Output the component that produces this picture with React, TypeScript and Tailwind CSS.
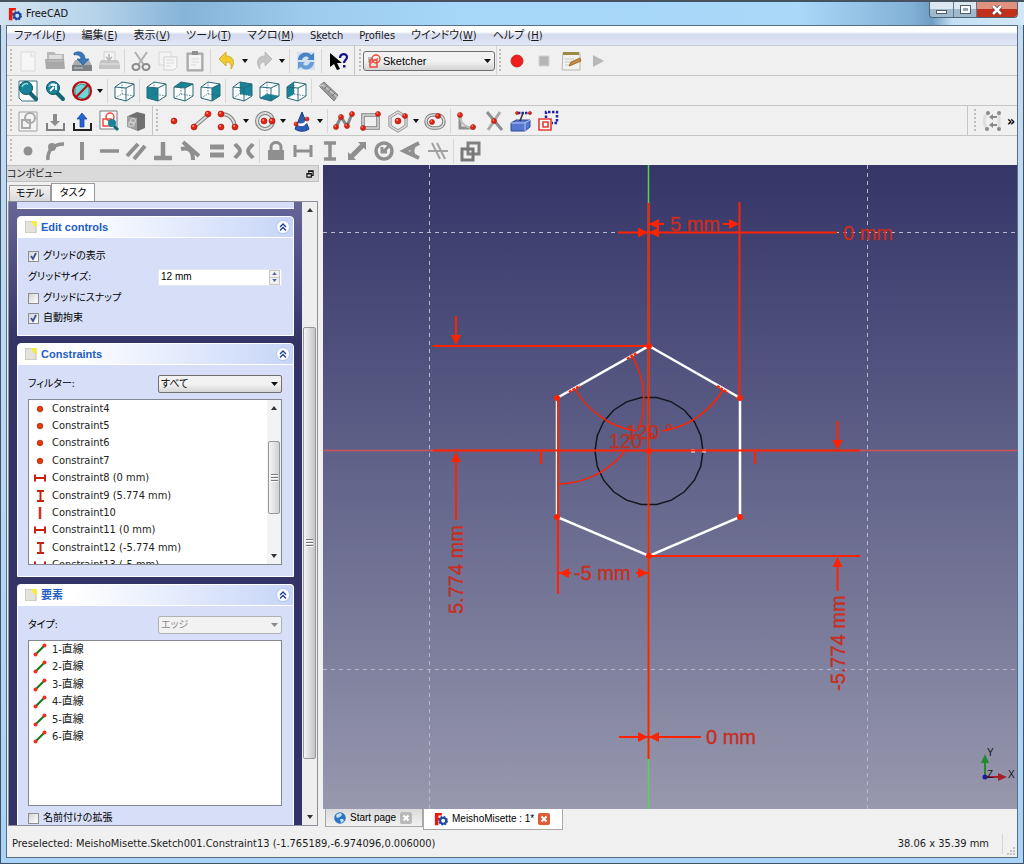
import type { ReactNode } from "react";

const TEAL = "#17849a";
const GREY = "#8f8f8f";
const RED = "#ff2200";

function Svg({ children }: { children: ReactNode }) {
    return (
        <svg viewBox="0 0 24 24" className="w-6 h-6 shrink-0" fill="none" aria-hidden="true">
            {children}
        </svg>
    );
}

function Ball({ x, y, r = 3 }: { x: number; y: number; r?: number }) {
    return (
        <g>
            <circle cx={x} cy={y} r={r} fill="#e32412" stroke="#a3140a" strokeWidth="0.6" />
            <circle cx={x - 0.8} cy={y - 0.9} r={r / 3} fill="#ff9a85" />
        </g>
    );
}

function FreeCadLogo() {
    return (
        <svg viewBox="0 0 16 16" className="w-[14px] h-[14px] shrink-0" aria-hidden="true">
            <path d="M1 1h8v3H5v2.500h3v3H5V15H1z" fill="#e8190f" />
            <circle cx="10.500" cy="10" r="3.400" fill="none" stroke="#1e4a9e" strokeWidth="2.400" />
            <circle cx="10.500" cy="10" r="4.700" fill="none" stroke="#1e4a9e" strokeWidth="1.600" strokeDasharray="2 1.690" />
        </svg>
    );
}

const cubeFaces: Record<string, string> = {
    front: "3,8 14,9 14,22 3,19",
    top: "3,8 10,3 22,5 14,9",
    right: "14,9 22,5 22,17 14,22",
    rear: "10,3 22,5 22,17 10,15",
    bottom: "3,19 10,15 22,17 14,22",
    left: "3,8 10,3 10,15 3,19",
};

function Cube({ face }: { face?: string }) {
    return (
        <Svg>
            <polygon points="3,8 10,3 22,5 22,17 14,22 3,19" fill="#fbfdfd" />
            {face && <polygon points={cubeFaces[face]} fill={TEAL} />}
            <path d="M10 3v12M3 19l7-4M10 15l12 2" stroke="#2b6775" strokeWidth="0.8" strokeDasharray="1.500 1.200" />
            <path d="M3 8l7-5 12 2v12l-8 5-11-3zM3 8l11 1 8-4M14 9v13" stroke="#2b6775" strokeWidth="1" strokeLinejoin="round" />
        </Svg>
    );
}

const fileIcons = {
    new: (
        <Svg>
            <path d="M5 3h14v19H5z" fill="#f6f6f6" stroke="#dadada" />
            <path d="M14 3l5 5h-5z" fill="#e6e6e6" />
        </Svg>
    ),
    open: (
        <Svg>
            <path d="M4 3h7l2 2h8v12H4z" fill="#b9b9b9" />
            <path d="M6 6h13v8H6z" fill="#dedede" />
            <path d="M2 10h19l1 10H3z" fill="#a8a8a8" />
            <path d="M4 12h16" stroke="#c4c4c4" />
        </Svg>
    ),
    save: (
        <Svg>
            <path d="M5 11h14l3 6v5H2v-5z" fill="#a8abaf" />
            <path d="M2 16h20v6H2z" fill="#7e8286" />
            <path d="M4 19h9" stroke="#c9cccf" />
            <path d="M4 4c6-3 11 0 11 6h4l-6 6-6-6h4c0-3-3-5-7-4z" fill="#3b78b8" stroke="#265a92" strokeWidth="0.700" />
        </Svg>
    ),
    print: (
        <Svg>
            <path d="M7 3h11v9H7z" fill="#f4f4f4" stroke="#d2d2d2" />
            <path d="M4 11h17l2 4v5H2v-5z" fill="#c4c4c4" />
            <path d="M2 15h21" stroke="#e8e8e8" />
            <path d="M12 5v5M9 8l3 3 3-3" stroke="#b4b4b4" strokeWidth="1.500" />
        </Svg>
    ),
    cut: (
        <Svg>
            <path d="M6 3l9 13M18 3L9 16" stroke="#b0b0b0" strokeWidth="2" />
            <ellipse cx="7" cy="18" rx="3.500" ry="3" stroke="#8c8c8c" strokeWidth="2" />
            <ellipse cx="17" cy="18" rx="3.500" ry="3" stroke="#8c8c8c" strokeWidth="2" />
        </Svg>
    ),
    copy: (
        <Svg>
            <path d="M3 3h12v13H3z" fill="#f3f3f3" stroke="#d6d6d6" />
            <path d="M8 8h13v10l-3 3H8z" fill="#f6f6f6" stroke="#cfcfcf" />
            <path d="M10 11h8M10 14h8M10 17h5" stroke="#dadada" />
        </Svg>
    ),
    paste: (
        <Svg>
            <path d="M4 4h16v18H4z" fill="#b5b5b5" stroke="#a3a3a3" />
            <path d="M6 6h12v14H6z" fill="#f4f4f4" />
            <path d="M9 2h6v4H9z" fill="#8e8e8e" />
            <path d="M8 10h8M8 13h8M8 16h5" stroke="#dadada" />
        </Svg>
    ),
    undo: (
        <Svg>
            <path d="M4 10l7-7v4c7 0 10 6 5 13 1-5-1-7-5-7v4z" fill="#f2cc2f" stroke="#c99f13" strokeWidth="0.800" />
        </Svg>
    ),
    redo: (
        <Svg>
            <path d="M20 10l-7-7v4c-7 0-10 6-5 13-1-5 1-7 5-7v4z" fill="#c3c3c3" stroke="#b4b4b4" strokeWidth="0.800" />
        </Svg>
    ),
    refresh: (
        <Svg>
            <path d="M3 3h18v18H3z" fill="#d3e2f2" />
            <path d="M4 11c0-7 9-10 13-5l3-2v7h-7l2-2c-3-3-6-1-7 2z" fill="#4a83c4" />
            <path d="M20 13c0 7-9 10-13 5l-3 2v-7h7l-2 2c3 3 6 1 7-2z" fill="#6b9dd5" />
        </Svg>
    ),
    whatsThis: (
        <Svg>
            <path d="M4 4v14l4-3 3 6 3-1-3-6h5z" fill="#000" />
            <path d="M14 9c0-5 7-5 7-1 0 3-3 3-3 6" stroke="#12128c" strokeWidth="2.200" />
            <path d="M17 16h2.500v2.500H17z" fill="#12128c" />
        </Svg>
    ),
};

const magnifier = (
    <g>
        <path d="M14 14l6 6" stroke="#176575" strokeWidth="4" strokeLinecap="round" />
        <circle cx="10" cy="9" r="6.500" fill={TEAL} stroke="#0d5261" />
        <path d="M6 8c1-3 4-4 6-3" stroke="#8fd0dc" strokeWidth="1.500" />
    </g>
);

const viewIcons = {
    fitAll: (
        <Svg>
            <path d="M3 2h18v20H6l-3-3z" fill="#fff" stroke="#3b7583" />
            {magnifier}
        </Svg>
    ),
    fitSelection: (
        <Svg>
            {magnifier}
            <path d="M7 12l4-4M8 6h5v5" stroke="#fff" strokeWidth="1.800" />
        </Svg>
    ),
    drawStyle: (
        <Svg>
            <path d="M5 8l6-3 8 2v9l-5 4-9-3z" fill="#6fd6da" stroke="#2b8c95" />
            <circle cx="12" cy="12" r="9" stroke="#b01010" strokeWidth="2.200" />
            <path d="M18 6L6 18" stroke="#b01010" strokeWidth="2.200" />
        </Svg>
    ),
    measure: (
        <Svg>
            <path d="M3 7l5-4 14 13-4 6z" fill="#9a9a9a" stroke="#808080" />
            <path d="M3 7l4-1 14 12" stroke="#c9c9c9" strokeWidth="1.500" />
            <path d="M8 10l3-3M12 13l3-3M16 17l3-3" stroke="#6f6f6f" />
        </Svg>
    ),
};

const sketchFileIcons = {
    newSketch: (
        <Svg>
            <path d="M3 3h18v19H3z" fill="#f4f4f4" stroke="#a0a0a0" />
            <circle cx="14" cy="9" r="5" stroke="#a9a9a9" strokeWidth="2" />
            <path d="M6 11h8v8H6z" stroke="#a9a9a9" strokeWidth="2" />
        </Svg>
    ),
    importSketch: (
        <Svg>
            <path d="M4 14v7h17v-7" stroke="#808080" strokeWidth="2" />
            <path d="M12 17l-5-5h3V5h4v7h3z" fill="#8c8c8c" />
        </Svg>
    ),
    leaveSketch: (
        <Svg>
            <path d="M4 14v7h17v-7" stroke="#222" strokeWidth="2" />
            <path d="M12 4l5 6h-3v8h-4v-8H7z" fill="#2464d8" stroke="#123c93" strokeWidth="0.700" />
        </Svg>
    ),
    viewSketch: (
        <Svg>
            <path d="M3 2h17v18H3z" fill="#fff" stroke="#777" />
            <circle cx="13" cy="8" r="4" stroke="#ef4b3c" strokeWidth="1.500" />
            <path d="M6 10h8v7H6z" stroke="#ef4b3c" strokeWidth="1.500" />
            <path d="M17 17l4 4" stroke="#176575" strokeWidth="3" />
            <circle cx="15" cy="14" r="4" fill={TEAL} />
        </Svg>
    ),
    mapSketch: (
        <Svg>
            <path d="M4 7l9-4 8 2v14l-7 3-10-4z" fill="#707070" />
            <path d="M3 7l10 2v12L3 18z" fill="#a0a0a0" />
            <circle cx="9" cy="12" r="2.500" stroke="#d8d8d8" />
            <path d="M5 13h5v4H5z" stroke="#d8d8d8" />
        </Svg>
    ),
};

const geometryIcons = {
    point: (
        <Svg>
            <Ball x={12} y={12} />
        </Svg>
    ),
    line: (
        <Svg>
            <path d="M5 18L19 6" stroke="#7e7e7e" strokeWidth="4" />
            <path d="M5 18L19 6" stroke="#dcdcdc" strokeWidth="2" />
            <Ball x={5} y={18} />
            <Ball x={19} y={5} />
        </Svg>
    ),
    arc: (
        <Svg>
            <path d="M5 5c8 0 13 5 14 13" stroke="#7e7e7e" strokeWidth="4" />
            <path d="M5 5c8 0 13 5 14 13" stroke="#dcdcdc" strokeWidth="2" />
            <Ball x={5} y={5} />
            <Ball x={19} y={18} />
            <Ball x={5} y={18} />
        </Svg>
    ),
    circle: (
        <Svg>
            <circle cx="12" cy="12" r="8" stroke="#7e7e7e" strokeWidth="4" />
            <circle cx="12" cy="12" r="8" stroke="#dcdcdc" strokeWidth="2" />
            <Ball x={11} y={12} />
            <Ball x={19} y={12} />
        </Svg>
    ),
    conic: (
        <Svg>
            <path d="M12 3l7 17c-4 3-10 3-14 0z" fill="#2a5db3" stroke="#173f82" />
            <path d="M8 15c4 2 8 0 9-4" stroke="#fff" strokeWidth="2.500" />
            <Ball x={6} y={15} r={2} />
            <Ball x={17} y={10} r={2} />
        </Svg>
    ),
    polyline: (
        <Svg>
            <path d="M4 18l5-10 6 9 5-12" stroke="#858585" strokeWidth="3" />
            <Ball x={4} y={18} r={2.5} />
            <Ball x={9} y={8} r={2.5} />
            <Ball x={15} y={17} r={2.5} />
            <Ball x={20} y={5} r={2.5} />
        </Svg>
    ),
    rect: (
        <Svg>
            <path d="M4 6h15v13H4z" stroke="#7e7e7e" strokeWidth="3.500" />
            <path d="M4 6h15v13H4z" stroke="#dcdcdc" strokeWidth="1.500" />
            <Ball x={19} y={5} r={2.5} />
            <Ball x={4} y={19} r={2.5} />
        </Svg>
    ),
    polygon: (
        <Svg>
            <path d="M12 3l8 5v9l-8 5-8-5V8z" stroke="#7e7e7e" strokeWidth="3" />
            <path d="M12 3l8 5v9l-8 5-8-5V8z" stroke="#dcdcdc" strokeWidth="1.500" />
            <Ball x={12} y={12} />
            <Ball x={19} y={7} r={2.5} />
        </Svg>
    ),
    slot: (
        <Svg>
            <rect x="3" y="6" width="18" height="13" rx="6.500" stroke="#7e7e7e" strokeWidth="3.500" />
            <rect x="3" y="6" width="18" height="13" rx="6.500" stroke="#dcdcdc" strokeWidth="1.500" />
            <Ball x={9} y={13} r={2.5} />
            <Ball x={15} y={7} r={2.5} />
        </Svg>
    ),
    fillet: (
        <Svg>
            <path d="M5 5v14h15" stroke="#8e8e8e" strokeWidth="3" />
            <path d="M5 8c1 7 5 10 12 11" stroke="#bdbdbd" strokeWidth="2" />
            <Ball x={5} y={6} r={2.5} />
            <Ball x={18} y={18} r={2.5} />
        </Svg>
    ),
    trim: (
        <Svg>
            <path d="M5 3l15 18" stroke="#8e8e8e" strokeWidth="3" />
            <path d="M18 3L6 21" stroke="#a9a9a9" strokeWidth="3" />
            <Ball x={12} y={12} r={2.5} />
        </Svg>
    ),
    external: (
        <Svg>
            <path d="M2 14l5-3h14v7l-5 4H2z" fill="#5677cf" stroke="#2f4c9c" />
            <path d="M2 14h14v8M16 14l5-3" stroke="#b8c8f4" />
            <path d="M9 4h12" stroke="#2424a0" strokeWidth="2.500" strokeDasharray="2.500 1" />
            <path d="M14 4l-3 8" stroke="#333" strokeWidth="1.500" />
            <Ball x={8} y={4} r={1.5} />
            <Ball x={21} y={4} r={1.5} />
        </Svg>
    ),
    carbon: (
        <Svg>
            <path d="M10 9V3h11v11h-5" stroke="#2424a0" strokeWidth="2.500" strokeDasharray="2.500 1.500" />
            <path d="M3 10h12v11H3z" fill="#fff" stroke="#e83a34" strokeWidth="1.600" />
            <path d="M7 13h5v5H7z" stroke="#e83a34" strokeWidth="1.600" />
        </Svg>
    ),
    bspline: (
        <Svg>
            <path d="M8 4C3 8 3 16 8 20M19 4v16" stroke="#dedede" strokeWidth="3" />
            <path d="M10 8h7M10 16h7" stroke="#8a8a8a" strokeWidth="2" />
            <path d="M13 5l-4 3 4 3zM13 13l-4 3 4 3z" fill="#8a8a8a" />
            <circle cx="8" cy="4" r="2" fill="#8a8a8a" />
            <circle cx="19" cy="4" r="2" fill="#8a8a8a" />
            <circle cx="7" cy="20" r="2" fill="#8a8a8a" />
            <circle cx="19" cy="20" r="2" fill="#8a8a8a" />
        </Svg>
    ),
};

const constraintPaths: { name: string; d: string; w?: number }[] = [
    { name: "Vertical", d: "M12 3v18", w: 4 },
    { name: "Horizontal", d: "M3 12h19", w: 3.5 },
    { name: "Parallel", d: "M3 17L14 5M10 20L21 7", w: 4 },
    { name: "Perpendicular", d: "M12 3v16M3 19h18", w: 4.5 },
    { name: "Tangent", d: "M5 3l16 14M3 10c8-2 12 2 12 11", w: 4 },
    { name: "Equal", d: "M5 8h14M5 16h14", w: 5 },
    { name: "Symmetric", d: "M3 5c2 3 5 4 5 7s-3 4-5 7M21 5c-2 3-5 4-5 7s3 4 5 7", w: 4 },
];

function ToolButton({ label, menu, children }: { label: string; menu?: boolean; children: ReactNode }) {
    return (
        <div className="flex items-center">
            <button type="button" aria-label={label} className="w-[27px] h-7 flex items-center justify-center">
                {children}
            </button>
            {menu && (
                <button type="button" aria-label={`${label} menu`} className="w-[10px] h-7 flex items-center justify-center">
                    <svg viewBox="0 0 6 4" className="w-[6px] h-1" aria-hidden="true">
                        <path d="M0 0h6L3 4z" fill="#111" />
                    </svg>
                </button>
            )}
        </div>
    );
}

function Separator() {
    return <div className="w-[5px] h-6 shrink-0 flex justify-center"><div className="w-px bg-[#d6d6d6]" /></div>;
}

function Handle() {
    return <div className="w-[2px] h-6 mx-[2px] shrink-0 bg-[repeating-linear-gradient(180deg,#bdbdbd_0_2px,transparent_2px_4px)]" />;
}

function ToolRow({ children, last }: { children: ReactNode; last?: boolean }) {
    return (
        <div className={`flex items-center shrink-0 bg-[#f0f0f0] pl-px ${last ? "h-[29px]" : "h-[30px] border-b border-[#c6c6c6]"}`}>
            {children}
        </div>
    );
}

const menus = [
    ["ファイル(", "F", ")"],
    ["編集(", "E", ")"],
    ["表示(", "V", ")"],
    ["ツール(", "T", ")"],
    ["マクロ(", "M", ")"],
    ["S", "k", "etch"],
    ["P", "r", "ofiles"],
    ["ウインドウ(", "W", ")"],
    ["ヘルプ (", "H", ")"],
];

function TitleBar() {
    return (
        <header className="h-[25px] shrink-0 flex items-center pl-2 pr-[6px] border-t-2 border-[#46535f] bg-[linear-gradient(90deg,#d3e3f0_0%,#b7d4ea_9%,#86b4d8_18%,#9ccbee_30%,#a6d6f8_45%,#a9d8f9_78%,#82b1d6_89%,#6f9cc3_91%,#c4e0f4_93%,#d3e8f6_100%)]">
            <FreeCadLogo />
            <h1 className="ml-1 text-[11px] leading-4 text-[#111]">FreeCAD</h1>
            <div className="ml-auto self-start flex h-4 rounded-b border border-t-0 border-[#4c6478] overflow-hidden">
                <button type="button" aria-label="Minimize" className="w-6 flex items-center justify-center border-r border-[#5f7a90] bg-linear-to-b from-[#dbe8f2] from-50% to-[#9fb9cd] to-50%">
                    <span className="w-[11px] h-1 mt-1 bg-white border border-[#4f5d69]" />
                </button>
                <button type="button" aria-label="Maximize" className="w-[23px] flex items-center justify-center border-r border-[#5f7a90] bg-linear-to-b from-[#dbe8f2] from-50% to-[#9fb9cd] to-50%">
                    <span className="w-[9px] h-[7px] bg-[#8fa6b8] border-2 border-white outline outline-[#4f5d69]" />
                </button>
                <button type="button" aria-label="Close" className="w-10 flex items-center justify-center bg-linear-to-b from-[#e0917f] from-45% to-[#c0301b] to-50%">
                    <svg viewBox="0 0 12 10" className="w-3 h-[10px]" aria-hidden="true">
                        <path d="M2 1l8 8M10 1L2 9" stroke="#5b3a3a" strokeWidth="4" />
                        <path d="M2 1l8 8M10 1L2 9" stroke="#fff" strokeWidth="2.500" />
                    </svg>
                </button>
            </div>
        </header>
    );
}

function SketcherIcon() {
    return (
        <svg viewBox="0 0 14 14" className="w-[14px] h-[14px]" fill="none" aria-hidden="true">
            <path d="M1 3h4v6H1z" fill="#bbb" />
            <circle cx="9" cy="5" r="4" stroke="#f0453a" strokeWidth="1.400" />
            <path d="M3 6h7v7H3z" stroke="#f0453a" strokeWidth="1.400" />
            <path d="M2 11l9-7" stroke="#f0453a" />
        </svg>
    );
}

function Toolbars() {
    return (
        <>
            <ToolRow>
                <Handle />
                <ToolButton label="New">{fileIcons.new}</ToolButton>
                <ToolButton label="Open">{fileIcons.open}</ToolButton>
                <ToolButton label="Save">{fileIcons.save}</ToolButton>
                <ToolButton label="Print">{fileIcons.print}</ToolButton>
                <Separator />
                <ToolButton label="Cut">{fileIcons.cut}</ToolButton>
                <ToolButton label="Copy">{fileIcons.copy}</ToolButton>
                <ToolButton label="Paste">{fileIcons.paste}</ToolButton>
                <Separator />
                <ToolButton label="Undo" menu>{fileIcons.undo}</ToolButton>
                <ToolButton label="Redo" menu>{fileIcons.redo}</ToolButton>
                <Separator />
                <ToolButton label="Refresh">{fileIcons.refresh}</ToolButton>
                <Separator />
                <ToolButton label="What's this">{fileIcons.whatsThis}</ToolButton>
                <div className="w-px h-full ml-[3px] mr-[2px] bg-[#c6c6c6]" />
                <Handle />
                <div className="relative w-[132px] h-5">
                    <select aria-label="Workbench" defaultValue="Sketcher" className="block appearance-none w-full h-full pl-[19px] font-['Liberation_Sans',sans-serif] text-[11px] leading-4 text-black rounded-[3px] border border-[#707070] bg-linear-to-b from-[#f2f2f2] from-50% to-[#d4d4d4]">
                        <option>Sketcher</option>
                    </select>
                    <span className="absolute left-1 top-[3px] pointer-events-none"><SketcherIcon /></span>
                    <svg viewBox="0 0 7 4" className="absolute right-1 top-2 w-[7px] h-1 pointer-events-none" aria-hidden="true">
                        <path d="M0 0h7L3.500 4z" fill="#111" />
                    </svg>
                </div>
                <div className="w-px h-full ml-px bg-[#d6d6d6]" />
                <Handle />
                <ToolButton label="Record macro">
                    <Svg><circle cx="12" cy="12" r="6" fill="#ee1f1f" stroke="#c41414" strokeWidth="0.800" /></Svg>
                </ToolButton>
                <ToolButton label="Stop macro">
                    <Svg><path d="M7 7h10v10H7z" fill="#b5b5b5" stroke="#d2d2d2" /></Svg>
                </ToolButton>
                <ToolButton label="Macros">
                    <Svg>
                        <path d="M4 4h17v17H3z" fill="#f1f1ee" stroke="#b5b5ad" />
                        <path d="M4 3h16v3H4z" fill="#9b8b42" />
                        <path d="M6 10h9M6 13h7M6 16h5" stroke="#c9c9c4" />
                        <path d="M10 17l2-4 9-4 1 3-9 4z" fill="#c98a3c" stroke="#8a5a22" strokeWidth="0.700" />
                    </Svg>
                </ToolButton>
                <ToolButton label="Execute macro">
                    <Svg><path d="M7 6l11 6-11 6z" fill="#b8b8b8" /></Svg>
                </ToolButton>
            </ToolRow>

            <ToolRow>
                <Handle />
                <ToolButton label="Fit all">{viewIcons.fitAll}</ToolButton>
                <ToolButton label="Fit selection">{viewIcons.fitSelection}</ToolButton>
                <ToolButton label="Draw style" menu>{viewIcons.drawStyle}</ToolButton>
                <Separator />
                <ToolButton label="Axonometric"><Cube /></ToolButton>
                <Separator />
                <ToolButton label="Front"><Cube face="front" /></ToolButton>
                <ToolButton label="Top"><Cube face="top" /></ToolButton>
                <ToolButton label="Right"><Cube face="right" /></ToolButton>
                <Separator />
                <ToolButton label="Rear"><Cube face="rear" /></ToolButton>
                <ToolButton label="Bottom"><Cube face="bottom" /></ToolButton>
                <ToolButton label="Left"><Cube face="left" /></ToolButton>
                <Separator />
                <ToolButton label="Measure distance">{viewIcons.measure}</ToolButton>
            </ToolRow>

            <ToolRow>
                <Handle />
                <ToolButton label="New sketch">{sketchFileIcons.newSketch}</ToolButton>
                <ToolButton label="Edit sketch">{sketchFileIcons.importSketch}</ToolButton>
                <ToolButton label="Leave sketch">{sketchFileIcons.leaveSketch}</ToolButton>
                <ToolButton label="View sketch">{sketchFileIcons.viewSketch}</ToolButton>
                <ToolButton label="Map sketch">{sketchFileIcons.mapSketch}</ToolButton>
                <div className="w-px h-full ml-[3px] mr-px bg-[#c6c6c6]" />
                <Handle />
                <ToolButton label="Point">{geometryIcons.point}</ToolButton>
                <ToolButton label="Line">{geometryIcons.line}</ToolButton>
                <ToolButton label="Arc" menu>{geometryIcons.arc}</ToolButton>
                <ToolButton label="Circle" menu>{geometryIcons.circle}</ToolButton>
                <ToolButton label="Conic" menu>{geometryIcons.conic}</ToolButton>
                <Separator />
                <ToolButton label="Polyline">{geometryIcons.polyline}</ToolButton>
                <ToolButton label="Rectangle">{geometryIcons.rect}</ToolButton>
                <ToolButton label="Polygon" menu>{geometryIcons.polygon}</ToolButton>
                <ToolButton label="Slot">{geometryIcons.slot}</ToolButton>
                <Separator />
                <ToolButton label="Fillet">{geometryIcons.fillet}</ToolButton>
                <ToolButton label="Trim">{geometryIcons.trim}</ToolButton>
                <ToolButton label="External geometry">{geometryIcons.external}</ToolButton>
                <ToolButton label="Construction mode">{geometryIcons.carbon}</ToolButton>
                <div className="ml-auto h-full flex items-center border-l border-[#c6c6c6] pl-1">
                    <Handle />
                    <ToolButton label="B-spline tools">{geometryIcons.bspline}</ToolButton>
                    <button type="button" aria-label="More tools" className="w-3 text-[14px] leading-4 font-bold text-black">»</button>
                </div>
            </ToolRow>

            <ToolRow last>
                <Handle />
                <ToolButton label="Coincident">
                    <Svg><circle cx="12" cy="12" r="4.500" fill={GREY} /></Svg>
                </ToolButton>
                <ToolButton label="Point on object">
                    <Svg>
                        <path d="M5 21C4 12 10 5 21 5" stroke={GREY} strokeWidth="3.500" />
                        <circle cx="9" cy="8" r="4" fill={GREY} />
                    </Svg>
                </ToolButton>
                {constraintPaths.map((icon) => (
                    <ToolButton key={icon.name} label={icon.name}>
                        <Svg><path d={icon.d} stroke={GREY} strokeWidth={icon.w} /></Svg>
                    </ToolButton>
                ))}
                <Separator />
                <ToolButton label="Lock">
                    <Svg>
                        <path d="M4 11h16v10H4z" fill={GREY} />
                        <path d="M7 12V8c0-6 10-6 10 0v4" stroke={GREY} strokeWidth="3" />
                    </Svg>
                </ToolButton>
                <ToolButton label="Horizontal distance">
                    <Svg><path d="M4 6v12M20 6v12M4 12h16" stroke={GREY} strokeWidth="3" /></Svg>
                </ToolButton>
                <ToolButton label="Vertical distance">
                    <Svg><path d="M6 4h12M6 20h12M12 4v16" stroke={GREY} strokeWidth="3.500" /></Svg>
                </ToolButton>
                <ToolButton label="Length">
                    <Svg>
                        <path d="M6 18L18 6" stroke={GREY} strokeWidth="5" />
                        <path d="M3 21v-8l8 8zM21 3v8l-8-8z" fill={GREY} />
                    </Svg>
                </ToolButton>
                <ToolButton label="Radius">
                    <Svg>
                        <circle cx="12" cy="12" r="8" stroke={GREY} strokeWidth="3.500" />
                        <path d="M11 13l6-6M10 8v5h5" stroke={GREY} strokeWidth="3" />
                    </Svg>
                </ToolButton>
                <ToolButton label="Angle">
                    <Svg><path d="M20 4L5 12l15 7M15 7c-2 3-2 7 0 10" stroke={GREY} strokeWidth="4" /></Svg>
                </ToolButton>
                <ToolButton label="Snell's law">
                    <Svg><path d="M2 12h20M6 4l8 16M11 4l8 16" stroke="#a2a2a2" strokeWidth="2" /></Svg>
                </ToolButton>
                <Separator />
                <ToolButton label="Internal alignment">
                    <Svg>
                        <path d="M10 4h11v11H10z" stroke="#808080" strokeWidth="3" />
                        <path d="M4 10h11v11H4z" stroke="#777" strokeWidth="3" />
                    </Svg>
                </ToolButton>
            </ToolRow>
        </>
    );
}

function Arrow({ up }: { up?: boolean }) {
    return (
        <svg viewBox="0 0 6 4" className="w-[6px] h-1" aria-hidden="true">
            <path d={up ? "M0 4h6L3 0z" : "M0 0h6L3 4z"} fill="#333" />
        </svg>
    );
}

function Grip() {
    return <div className="w-[7px] h-2 bg-[repeating-linear-gradient(180deg,#777_0_1px,#fff_1px_2px,transparent_2px_3px)]" />;
}

function TaskPanel({ title, grow, children }: { title: string; grow?: boolean; children: ReactNode }) {
    return (
        <section className={`mx-2 shrink-0 rounded-t border border-white bg-[#d6dff7] ${grow ? "flex-1 border-b-0" : ""}`}>
            <header className="h-[21px] rounded-t flex items-center pl-[7px] pr-[3px] bg-linear-to-r from-white from-20% to-[#c6d5f8] border-b border-white">
                <svg viewBox="0 0 12 12" className="w-3 h-3" aria-hidden="true">
                    <path d="M0 0h11v12H0z" fill="#e3e3dc" stroke="#bcbcb4" />
                    <path d="M6 0h6v6l-3-1z" fill="#f5ec3d" />
                </svg>
                <h2 className="ml-1 font-['Liberation_Sans','Noto_Sans_CJK_JP',sans-serif] text-[11px] leading-4 font-bold text-[#215dc6]">{title}</h2>
                <button type="button" aria-label={`Collapse ${title}`} className="ml-auto w-[14px] h-[14px] rounded-full bg-white border border-[#b5c3e6] flex items-center justify-center">
                    <svg viewBox="0 0 8 8" className="w-2 h-2" fill="none" aria-hidden="true">
                        <path d="M1 4l3-3 3 3M1 7.500l3-3 3 3" stroke="#1d3f94" strokeWidth="1.400" />
                    </svg>
                </button>
            </header>
            <div className="pl-[10px] pr-[11px]">{children}</div>
        </section>
    );
}

function Check({ label, checked }: { label: string; checked?: boolean }) {
    return (
        <label className="flex items-center gap-1 h-5 text-[10px] leading-4 text-black">
            <span className="grid w-[11px] h-[11px]">
                <input type="checkbox" defaultChecked={checked} className="peer [grid-area:1/1] appearance-none w-[11px] h-[11px] border border-[#8e8f8f] bg-linear-to-br from-[#d5d5d5] to-white" />
                <svg viewBox="0 0 11 11" className="[grid-area:1/1] w-[11px] h-[11px] invisible peer-checked:visible pointer-events-none" fill="none" aria-hidden="true">
                    <path d="M3 5l2 3 3-6" stroke="#3b4f94" strokeWidth="1.800" />
                </svg>
            </span>
            {label}
        </label>
    );
}

function Field({ id, label, value, disabled }: { id: string; label: string; value: string; disabled?: boolean }) {
    return (
        <div className="flex items-center justify-between h-[18px] text-[10px] leading-4">
            <label htmlFor={id} className="text-black">{label}</label>
            <div className="relative w-[124px] h-[18px]">
                <select
                    id={id}
                    disabled={disabled}
                    defaultValue={value}
                    className="block appearance-none w-full h-full pl-[2px] text-[10px] leading-4 text-black border border-[#707070] rounded-xs bg-linear-to-b from-[#f2f2f2] from-50% to-[#d6d6d6] disabled:bg-none disabled:bg-[#f2f2f2] disabled:text-[#8a8a8a] disabled:border-[#adb2b5] disabled:opacity-100"
                >
                    <option>{value}</option>
                </select>
                <svg viewBox="0 0 7 4" className="absolute right-1 top-[7px] w-[7px] h-1 pointer-events-none" aria-hidden="true">
                    <path d="M0 0h7L3.500 4z" fill={disabled ? "#8a8a8a" : "#111"} />
                </svg>
            </div>
        </div>
    );
}

const constraints = [
    { kind: "dot", text: "Constraint4" },
    { kind: "dot", text: "Constraint5" },
    { kind: "dot", text: "Constraint6" },
    { kind: "dot", text: "Constraint7" },
    { kind: "h", text: "Constraint8 (0 mm)" },
    { kind: "v", text: "Constraint9 (5.774 mm)" },
    { kind: "bar", text: "Constraint10" },
    { kind: "h", text: "Constraint11 (0 mm)" },
    { kind: "v", text: "Constraint12 (-5.774 mm)" },
    { kind: "h", text: "Constraint13 (-5 mm)" },
];

function ConstraintIcon({ kind }: { kind: string }) {
    return (
        <svg viewBox="0 0 14 14" className="w-[14px] h-[14px] shrink-0" fill="none" aria-hidden="true">
            {kind === "dot" && <circle cx="7" cy="7" r="2.800" fill="#e8380d" stroke="#a82a0c" strokeWidth="0.800" />}
            {kind === "h" && <path d="M2 3.500v7M12 3.500v7M2 7h10" stroke="#c8230f" strokeWidth="2" />}
            {kind === "v" && <path d="M4 2h7M4 12h7M7.500 2v10" stroke="#c8230f" strokeWidth="2" />}
            {kind === "bar" && <path d="M7 1v12" stroke="#d0301c" strokeWidth="2.500" />}
        </svg>
    );
}

function TaskView() {
    return (
        <aside className="w-[313px] shrink-0 flex flex-col bg-[#f0f0f0]">
            <div className="h-[17px] mr-px shrink-0 flex items-center justify-between pr-1 bg-[#dadada] border border-l-0 border-[#c0c0c0] text-[10px] leading-4 text-[#222]">
                <span>コンポビュー</span>
                <button type="button" aria-label="Float panel">
                    <svg viewBox="0 0 9 9" className="w-2 h-2" fill="none" aria-hidden="true">
                        <path d="M3 3V1h5v5H6M3 1.500h5M1 4h5v4H1zM1 4.500h5" stroke="#111" strokeWidth="1.300" />
                    </svg>
                </button>
            </div>
            <div role="tablist" className="flex items-end h-[19px] pl-[2px] shrink-0 text-[10px] leading-4 text-black">
                <button type="button" role="tab" aria-selected="false" className="w-[42px] h-4 border border-b-0 border-[#9a9a9a] bg-linear-to-b from-[#f2f2f2] to-[#dadada]">モデル</button>
                <button type="button" role="tab" aria-selected="true" className="w-11 h-[18px] border border-b-0 border-[#9a9a9a] bg-white">タスク</button>
            </div>
            <div className="flex-1 min-h-0 flex ml-px mr-[2px] mb-1 border border-[#8e8f9c] bg-[#f0f0f0]">
                <div className="flex-1 min-w-0 flex flex-col gap-[7px] overflow-hidden bg-[linear-gradient(180deg,#666699_0px,#333366_140px)]">
                    <div className="h-[7px] mx-2 shrink-0 bg-[#d6dff7] border-b border-white" />
                    <TaskPanel title="Edit controls">
                        <div className="pt-2 pb-[7px]">
                            <Check label="グリッドの表示" checked />
                            <div className="flex items-center justify-between h-[22px] text-[10px] leading-4">
                                <label htmlFor="grid-size" className="text-black">グリッドサイズ:</label>
                                <div className="flex w-[124px] h-[17px] pr-px bg-white border border-[#e3e6ef]">
                                    <input id="grid-size" type="text" defaultValue="12 mm" className="flex-1 min-w-0 pl-[2px] font-['Liberation_Sans',sans-serif] text-[10px] leading-4 text-black" />
                                    <div className="w-[11px] flex flex-col">
                                        <button type="button" aria-label="Increase" className="flex-1 border border-[#c6c6c6] bg-[#f0f0f0] flex items-center justify-center">
                                            <svg viewBox="0 0 6 4" className="w-[5px] h-[3px]" aria-hidden="true"><path d="M0 4h6L3 0z" fill="#4a66a8" /></svg>
                                        </button>
                                        <button type="button" aria-label="Decrease" className="flex-1 border border-t-0 border-[#c6c6c6] bg-[#f0f0f0] flex items-center justify-center">
                                            <svg viewBox="0 0 6 4" className="w-[5px] h-[3px]" aria-hidden="true"><path d="M0 0h6L3 4z" fill="#4a66a8" /></svg>
                                        </button>
                                    </div>
                                </div>
                            </div>
                            <Check label="グリッドにスナップ" />
                            <Check label="自動拘束" checked />
                        </div>
                    </TaskPanel>

                    <TaskPanel title="Constraints">
                        <div className="pt-[10px] pb-[11px]">
                            <Field id="filter" label="フィルター:" value="すべて" />
                            <div className="mt-[6px] h-[166px] flex bg-white border border-[#828790]">
                                <div className="flex-1 overflow-hidden">
                                    <ul className="grid grid-rows-10 h-[174px] pl-1 text-[11px] leading-4 text-[#222]">
                                        {constraints.map((c) => (
                                            <li key={c.text} className="flex items-center gap-[5px] whitespace-nowrap">
                                                <ConstraintIcon kind={c.kind} />
                                                {c.text}
                                            </li>
                                        ))}
                                    </ul>
                                </div>
                                <div className="w-[14px] flex flex-col items-center bg-[#f3f3f3]">
                                    <div className="h-4 flex items-center"><Arrow up /></div>
                                    <div className="mt-[25px] w-3 h-[73px] rounded-xs border border-[#979797] bg-linear-to-r from-[#f5f5f5] to-[#d0d0d0] flex items-center justify-center"><Grip /></div>
                                    <div className="mt-auto h-4 flex items-center"><Arrow /></div>
                                </div>
                            </div>
                        </div>
                    </TaskPanel>

                    <TaskPanel title="要素" grow>
                        <div className="pt-[10px]">
                            <Field id="type" label="タイプ:" value="エッジ" disabled />
                            <div className="mt-[6px] h-[166px] bg-white border border-[#828790]">
                                <ul className="grid grid-rows-6 h-[105px] pl-1 text-[11px] leading-4 text-[#222]">
                                    {[1, 2, 3, 4, 5, 6].map((n) => (
                                        <li key={n} className="flex items-center gap-[5px]">
                                            <svg viewBox="0 0 14 14" className="w-[14px] h-[14px]" aria-hidden="true">
                                                <path d="M2.500 11.500l9-9" stroke="#1c7a1c" strokeWidth="2.200" />
                                                <circle cx="2.500" cy="11.500" r="2" fill="#f03020" />
                                                <circle cx="11.500" cy="2.500" r="2" fill="#f03020" />
                                            </svg>
                                            {n}-直線
                                        </li>
                                    ))}
                                </ul>
                            </div>
                            <div className="pt-[2px]"><Check label="名前付けの拡張" /></div>
                        </div>
                    </TaskPanel>
                </div>
                <div className="w-[15px] shrink-0 flex flex-col items-center bg-[#eeeeee]">
                    <div className="h-4 flex items-center"><Arrow up /></div>
                    <div className="h-[109px] shrink-0" />
                    <div className="flex-1 w-[13px] rounded-xs border border-[#979797] bg-linear-to-r from-[#f5f5f5] to-[#c4c4c8] flex items-center justify-center"><Grip /></div>
                    <div className="h-[50px] shrink-0" />
                    <div className="h-4 flex items-center"><Arrow /></div>
                </div>
            </div>
        </aside>
    );
}

// Solid arrow head with its tip at (x, y)
function Head({ x, y, dir }: { x: number; y: number; dir: "left" | "right" | "up" | "down" }) {
    const angle = { right: 0, down: 90, left: 180, up: 270 }[dir];
    return <path d="M0 0l-10-5v10z" fill={RED} transform={`translate(${x} ${y}) rotate(${angle})`} />;
}

const vertices = [[326, 181], [417, 233], [417, 352], [326, 391], [234, 352], [234, 233]];

// The circle is shown tessellated, as the 3D view draws it
const circlePoints = Array.from({ length: 22 }, (_, i) => {
    const a = (i / 22) * Math.PI * 2;
    return `${(326 + 54 * Math.cos(a)).toFixed(1)},${(286 + 54 * Math.sin(a)).toFixed(1)}`;
}).join(" ");

function SketchView() {
    return (
        <div className="flex-1 min-h-0 bg-linear-to-b from-[#353568] to-[#9898ae]">
            <svg viewBox="0 0 694 644" preserveAspectRatio="xMidYMid slice" className="w-full h-full block" fill="none" role="img" aria-label="Sketch view">
                <g stroke="#b9b9c6" strokeWidth="1" strokeDasharray="4 4">
                    <path d="M106.500 0v644M544.500 0v644M0 67.500h694M0 504.500h694" />
                </g>
                <path d="M0 285.500h694" stroke="#cf5059" strokeWidth="1.500" />
                <path d="M325.500 0v644" stroke="#50d850" strokeWidth="1.500" />

                <polygon points={circlePoints} stroke="#15151c" strokeWidth="1.500" />
                <polygon points={vertices.map((v) => v.join(",")).join(" ")} stroke="#fff" strokeWidth="2.500" />
                <path d="M368 286h4M379 286h4" stroke="#eee" strokeWidth="3" />

                <g fill="#d22c1e" stroke="#b8301f" strokeWidth="0.400" className="font-['Liberation_Sans',sans-serif] text-[20px]">
                    <text x="347" y="66">5 mm</text>
                    <text x="520" y="75">0 mm</text>
                    <text x="251" y="415">-5 mm</text>
                    <text x="383" y="579">0 mm</text>
                    <text x="303" y="274" fill="#b5352f">120 °</text>
                    <text x="286" y="283" fill="#b5352f">120 °</text>
                    <text transform="translate(140 449) rotate(-90)">5.774 mm</text>
                    <text transform="translate(522 526) rotate(-90)">-5.774 mm</text>
                </g>

                <g stroke={RED} strokeWidth="2">
                    <path d="M325.500 38v556M110 285.500h427" />
                    <path d="M416.500 37v196M295 67.500h219M326 59h15M400 59h14" />
                    <path d="M110 181h216M133 151v25M133 290v65" />
                    <path d="M326 391h211M514.500 256v26M514.500 396v30" />
                    <path d="M235 233v196M236 408h12M313 408h12M296 572h82" />
                    <path d="M218 287v12M432 287v12" />
                </g>
                <g stroke={RED} strokeWidth="1.500">
                    <path d="M252 224A86 86 0 0 0 313 266M339 266A86 86 0 0 0 400 225" />
                    <path d="M309 191A86 86 0 0 1 315 266M302 286A86 86 0 0 1 236 319" />
                    <path d="M246 227l11-6M304 194l10-6M394 221l11 7" strokeWidth="2.500" strokeDasharray="3 1" />
                </g>

                <Head x={326} y={59} dir="left" />
                <Head x={416} y={59} dir="right" />
                <Head x={325} y={67.5} dir="right" />
                <Head x={326} y={67.5} dir="left" />
                <Head x={133} y={180} dir="down" />
                <Head x={133} y={287} dir="up" />
                <Head x={514.5} y={285} dir="down" />
                <Head x={514.5} y={392} dir="up" />
                <Head x={236} y={408} dir="left" />
                <Head x={325} y={408} dir="right" />
                <Head x={325} y={572} dir="right" />
                <Head x={326} y={572} dir="left" />
                {[...vertices, [326, 286]].map(([x, y]) => (
                    <circle key={`${x}-${y}`} cx={x} cy={y} r="3" fill={RED} />
                ))}

                <path d="M662 612v-16" stroke="#1f8c2a" strokeWidth="2" />
                <path d="M662 589l-4 9h8z" fill="#1f8c2a" />
                <path d="M662 612h13" stroke="#a5202a" strokeWidth="2" />
                <path d="M684 612l-9-4v8z" fill="#a5202a" />
                <circle cx="662" cy="612" r="2.500" fill="#1c1c9c" />
                <g fill="#15151c" className="font-['Liberation_Sans',sans-serif] text-[10px]">
                    <text x="664" y="591">Y</text>
                    <text x="685" y="613">X</text>
                    <text x="664" y="613">Z</text>
                </g>
            </svg>
        </div>
    );
}

function CloseTab({ active }: { active?: boolean }) {
    return (
        <button type="button" aria-label="Close tab" className={`w-3 h-3 rounded-xs flex items-center justify-center ${active ? "bg-[#dd5a3a]" : "bg-[#b9b9b9]"}`}>
            <svg viewBox="0 0 8 8" className="w-2 h-2" aria-hidden="true">
                <path d="M1.500 1.500l5 5M6.500 1.500l-5 5" stroke="#fff" strokeWidth="2" />
            </svg>
        </button>
    );
}

export default function App() {
    return (
        <div className="h-screen min-h-[600px] flex flex-col overflow-hidden bg-[#b5d3ec] font-['DejaVu_Sans_Condensed','DejaVu_Sans','Noto_Sans_CJK_JP',sans-serif] [font-feature-settings:'palt']">
            <TitleBar />
            <div className="flex-1 min-h-0 flex border-l border-r border-b border-[#3f5366] pl-[5px] pr-[5px] pb-[5px] bg-linear-to-b from-[#c4dcf0] to-[#a9d4f7]">
                <div className="flex-1 min-w-0 flex flex-col border border-[#5b6f82] bg-[#f0f0f0]">
                    <nav className="h-5 shrink-0 flex items-center gap-4 pl-[7px] text-[11px] leading-4 text-[#1a1a1a] whitespace-nowrap border-b border-[#c6c9d6] bg-linear-to-b from-white from-30% via-[#d5dbee] via-45% to-[#e1e7f6]">
                        {menus.map(([before, key, after]) => (
                            <button type="button" key={before}>
                                {before}<span className="underline">{key}</span>{after}
                            </button>
                        ))}
                    </nav>
                    <Toolbars />
                    <div className="flex-1 min-h-0 flex">
                        <TaskView />
                        <main className="flex-1 min-w-0 flex flex-col ml-[3px]">
                            <SketchView />
                            <div role="tablist" className="flex items-start h-[21px] pl-[2px] shrink-0 text-[10px] leading-4 text-black bg-[#f0f0f0] font-['Liberation_Sans','Noto_Sans_CJK_JP',sans-serif]">
                                <div role="tab" aria-selected="false" className="w-[98px] h-[18px] flex items-center gap-1 pl-2 border border-t-0 border-[#a8a8a8] bg-linear-to-b from-[#dadada] to-[#f2f2f2]">
                                    <svg viewBox="0 0 12 12" className="w-3 h-3" aria-hidden="true">
                                        <circle cx="6" cy="6" r="5.800" fill="#2b74c0" />
                                        <path d="M3 2l4-1 1 2-2 2-3 1-1-2zM6 7l3 0 1 2-3 2z" fill="#bfe0f5" />
                                    </svg>
                                    Start page
                                    <CloseTab />
                                </div>
                                <div role="tab" aria-selected="true" className="w-[140px] h-[21px] flex items-center gap-1 pl-[10px] border border-t-0 border-[#a8a8a8] bg-white">
                                    <FreeCadLogo />
                                    MeishoMisette : 1*
                                    <CloseTab active />
                                </div>
                            </div>
                        </main>
                    </div>
                    <footer className="h-[27px] shrink-0 flex items-center pl-[5px] text-[11px] leading-4 text-[#1c1c1c] bg-[#f0f0f0]">
                        <span className="truncate">Preselected: MeishoMisette.Sketch001.Constraint13 (-1.765189,-6.974096,0.006000)</span>
                        <span className="ml-auto pr-[13px] whitespace-nowrap">38.06 x 35.39 mm</span>
                        <div className="w-px h-5 bg-[#d4d4d4]" />
                        <svg viewBox="0 0 14 14" className="w-[14px] h-[14px] self-end shrink-0" aria-hidden="true">
                            <path d="M10 4h2v2h-2zM7 7h2v2H7zM10 7h2v2h-2zM4 10h2v2H4zM7 10h2v2H7zM10 10h2v2h-2z" fill="#c2c2c2" />
                        </svg>
                    </footer>
                </div>
            </div>
        </div>
    );
}
